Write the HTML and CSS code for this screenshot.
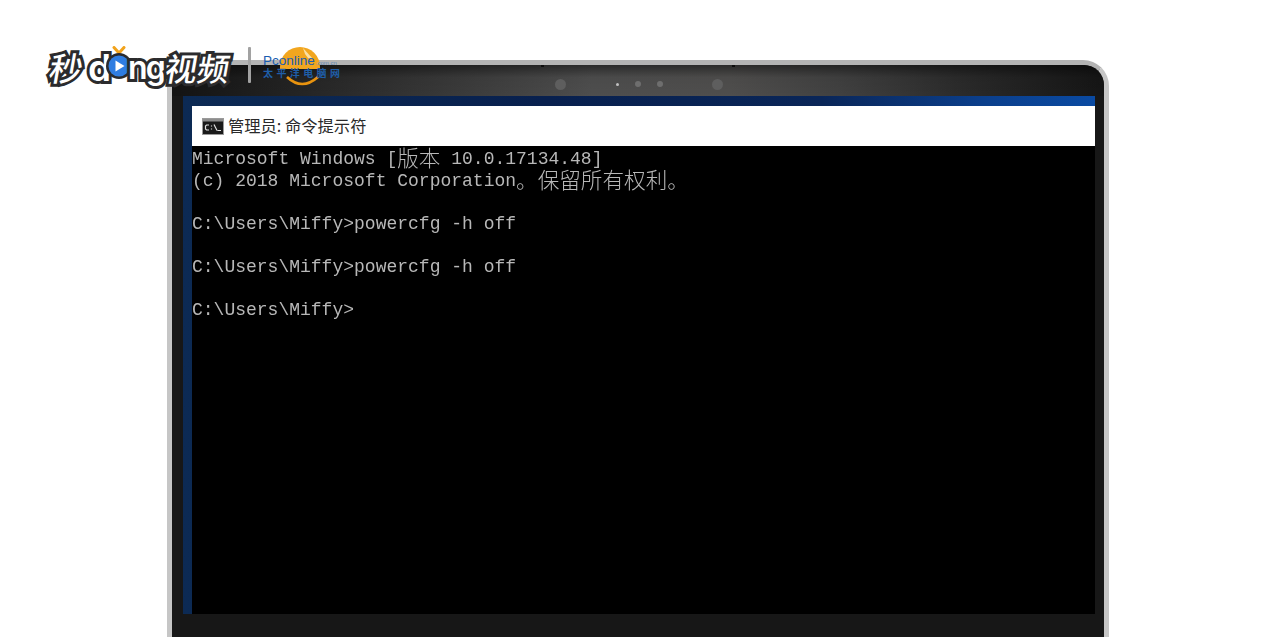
FILE: index.html
```html
<!DOCTYPE html>
<html lang="zh-CN">
<head>
<meta charset="utf-8">
<title>管理员: 命令提示符</title>
<link rel="stylesheet" href="styles.css">
</head>
<body>
<div class="page">
  <div class="laptop">
    <div class="bezel-top">
      <span class="notch notch-l"></span>
      <span class="notch notch-r"></span>
      <span class="cam cam-big"></span>
      <span class="cam cam-led"></span>
      <span class="cam cam-mid"></span>
      <span class="cam cam-mid2"></span>
      <span class="cam cam-big2"></span>
    </div>
    <div class="screen">
      <div class="window">
        <div class="titlebar">
          <svg class="cmd-icon" width="22" height="17" viewBox="0 0 22 17">
            <rect x="0.5" y="0.5" width="21" height="16" fill="#1a1a1a" stroke="#9a9a9a"/>
            <rect x="1" y="1" width="20" height="2.5" fill="#8d8d8d"/>
            <path d="M7 7H4.5L3.5 8V11L4.5 12H7M9.5 7.5V8.5M9.5 10.5V11.5M12 6.5L15 12.5M15.5 12.5H19" fill="none" stroke="#e0e0e0" stroke-width="1.2"/>
          </svg>
          <span class="title-text">管理员: 命令提示符</span>
        </div>
        <div class="console">
          <div class="line">Microsoft Windows [<span class="cjk">版本</span> 10.0.17134.48]</div>
          <div class="line">(c) 2018 Microsoft Corporation<span class="cjk">。保留所有权利。</span></div>
          <div class="line"></div>
          <div class="line">C:\Users\Miffy&gt;powercfg -h off</div>
          <div class="line"></div>
          <div class="line">C:\Users\Miffy&gt;powercfg -h off</div>
          <div class="line"></div>
          <div class="line">C:\Users\Miffy&gt;</div>
        </div>
      </div>
    </div>
    <div class="chin"></div>
  </div>

  <div class="logo">
    <span class="logo-word logo-cn">秒</span>
    <span class="logo-word logo-en">d</span>
    <span class="logo-dot">
      <svg width="26" height="34" viewBox="0 0 26 34">
        <path d="M8 1.5L13 7L18 1.5" fill="none" stroke="#f2a31b" stroke-width="3" stroke-linecap="round" stroke-linejoin="round"/>
        <circle cx="13" cy="20" r="13" fill="#2b2b2d"/>
        <circle cx="13" cy="20" r="10.5" fill="#2f7de1"/>
        <path d="M9.5 14.5L18.5 20L9.5 25.5Z" fill="#fff"/>
      </svg>
    </span>
    <span class="logo-word logo-en logo-ng">ng</span>
    <span class="logo-word logo-cn logo-cn2">视频</span>
  </div>
  <div class="logo-rule"></div>
  <div class="pc-logo">
    <svg class="pc-sun" width="44" height="44" viewBox="0 0 44 44">
      <path d="M1 22A20 20 0 0 1 41 22L41 24H1Z" fill="#f2a61f"/>
      <path d="M24 3L34 14L29 13L26 9Z" fill="#f9dfa6"/>
      <path d="M8 32Q23 46 39 32" fill="none" stroke="#e8930f" stroke-width="2.6"/>
    </svg>
    <div class="pc-name">Pconline<span class="pc-tld">.com.cn</span></div>
    <div class="pc-sub">太平洋电脑网</div>
  </div>
</div>
</body>
</html>
```
FILE: styles.css
```css
* { box-sizing: border-box; }
html, body { margin: 0; padding: 0; background: #fff; }
.page {
  position: relative;
  width: 1273px;
  height: 637px;
  overflow: hidden;
  padding: 60px 0 0 167px;
}
.laptop {
  width: 942px;
  height: 600px;
  border: 5px solid #c6c6c6;
  border-bottom: 0;
  border-top-color: #b4b4b4;
  border-radius: 26px 26px 0 0;
  background: #171717;
  display: flex;
  flex-direction: column;
}
.bezel-top {
  position: relative;
  height: 31px;
  flex: none;
  border-radius: 20px 20px 0 0;
  background:
    linear-gradient(180deg, rgba(0, 0, 0, 0.45) 0%, rgba(0, 0, 0, 0.05) 40%, rgba(0, 0, 0, 0) 100%),
    linear-gradient(90deg, #131313 0%, #262626 15%, #3c3c3c 32%, #4e4e4e 45%, #4f4e4d 60%, #404040 72%, #2a2a2a 85%, #151515 100%);
}
.notch, .cam { position: absolute; border-radius: 50%; }
.notch { width: 3px; height: 2px; top: 0; background: #0c0c0c; border-radius: 0; }
.notch-l { left: 369px; }
.notch-r { left: 560px; }
.cam { top: 14px; }
.cam-big { left: 383px; width: 11px; height: 11px; top: 14px; background: #5e5e5e; }
.cam-big2 { left: 540px; width: 11px; height: 11px; top: 14px; background: #5e5e5e; }
.cam-led { left: 444px; top: 18px; width: 3px; height: 3px; background: #c0c0c0; }
.cam-mid { left: 463px; top: 16px; width: 6px; height: 6px; background: #6e6e6e; }
.cam-mid2 { left: 485px; top: 16px; width: 6px; height: 6px; background: #6e6e6e; }
.screen {
  flex: none;
  width: 912px;
  height: 518px;
  margin-left: 11px;
  padding: 10px 0 0 9px;
  background: linear-gradient(90deg, #0c2a54 0%, #08204e 40%, #0a2658 70%, #0b3f8c 88%, #0a4aa2 100%);
}
.window { height: 100%; display: flex; flex-direction: column; }
.titlebar {
  flex: none;
  height: 40px;
  background: #fff;
  display: flex;
  align-items: center;
  gap: 4px;
  padding: 0 0 3px 10px;
}
.cmd-icon { flex: none; margin-top: 3px; }
.title-text {
  font-family: "Noto Sans CJK SC", "Liberation Sans", sans-serif;
  font-size: 16.3px;
  color: #2a2a2a;
  white-space: nowrap;
}
.console {
  flex: 1;
  background: #000;
  padding-top: 3px;
  color: #b8b8b8;
  font-family: "Liberation Mono", monospace;
  font-size: 18px;
  filter: blur(0.4px);
}
.line { height: 21.6px; line-height: 21.6px; white-space: pre; }
.cjk {
  font-family: "Noto Sans CJK SC", "Liberation Mono", sans-serif;
  font-size: 21.6px;
  font-weight: 300;
  line-height: 0;
  vertical-align: -2px;
}
.chin { flex: 1; background: #171717; }

.logo {
  position: absolute;
  left: 50px;
  top: 42px;
  height: 50px;
  display: flex;
  align-items: center;
}
.logo-word {
  color: #fff;
  -webkit-text-stroke: 6px #2b2b2d;
  paint-order: stroke fill;
  line-height: 1;
  white-space: nowrap;
}
.logo-cn {
  font-family: "Noto Sans CJK SC", sans-serif;
  font-size: 33px;
  font-weight: 500;
  transform: skewX(-10deg);
}
.logo-en {
  font-family: "Inter", "Lato", sans-serif;
  font-size: 37px;
  font-weight: 600;
  margin-left: 5px;
}
.logo-dot { flex: none; margin: -8px 0 0 -5px; display: flex; }
.logo-ng { margin: 2px 0 0 -4px; font-size: 32px; letter-spacing: -2px; }
.logo-cn2 { margin-left: 2px; font-size: 32px; }
.logo-rule {
  position: absolute;
  left: 248px;
  top: 47px;
  width: 3px;
  height: 36px;
  background: #a2a2a2;
  border-radius: 1px;
}
.pc-logo {
  position: absolute;
  left: 263px;
  top: 44px;
  width: 80px;
  height: 44px;
}
.pc-sun { position: absolute; left: 16px; top: 1px; }
.pc-name {
  position: absolute;
  left: 0;
  top: 9px;
  font-family: "Liberation Sans", sans-serif;
  font-size: 13.5px;
  color: #1a5cb0;
  white-space: nowrap;
}
.pc-tld { font-size: 6px; color: #5b86b8; margin-left: 1px; }
.pc-sub {
  position: absolute;
  left: 0;
  top: 23px;
  font-family: "Noto Sans CJK SC", sans-serif;
  font-size: 10px;
  line-height: 11px;
  font-weight: 700;
  letter-spacing: 3.4px;
  color: #1f5ea8;
  white-space: nowrap;
}
```
